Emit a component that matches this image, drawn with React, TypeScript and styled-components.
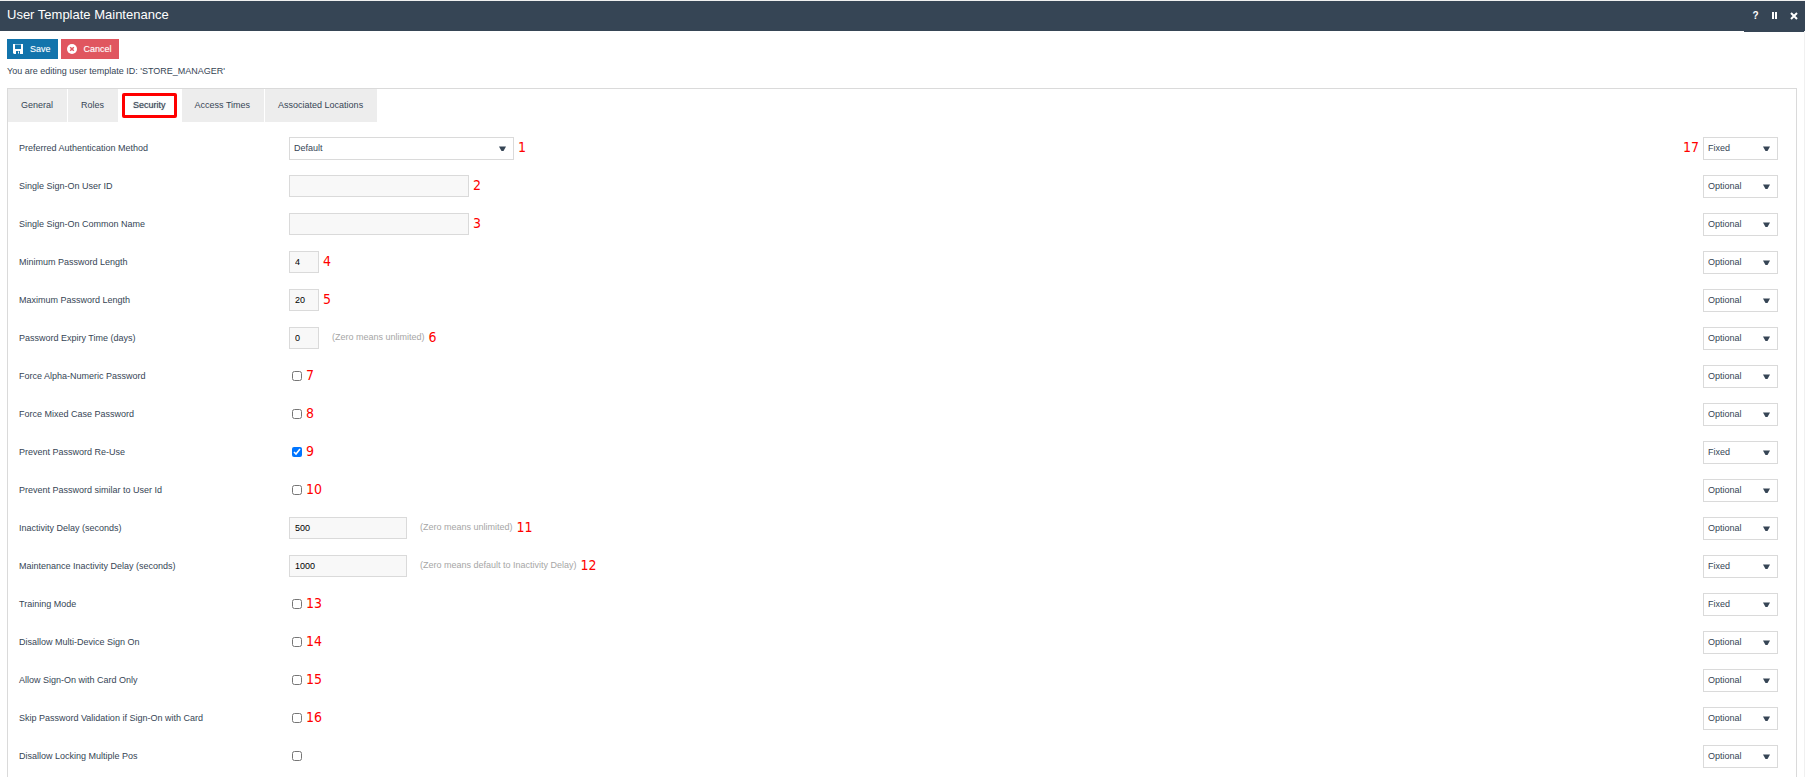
import React, { useState } from "react";
import styled, { createGlobalStyle } from "styled-components";

const slate = "#364555";
const line = "#dadada";

const Global = createGlobalStyle`
  * { box-sizing: border-box; }
  body {
    margin: 0;
    background: #fff;
    color: ${slate};
    font-family: "Liberation Sans", Arial, sans-serif;
    font-size: 9px;
  }
  input, select, button { font: inherit; margin: 0; }
`;

const Page = styled.div`
  display: flex;
  flex-direction: column;
  min-height: 100vh;
  border-top: 1px solid #f0f0f0;
`;

const TitleBar = styled.header`
  display: flex;
  justify-content: space-between;
  height: 30px;
  background: ${slate};
`;

const Title = styled.h1`
  margin: 0;
  padding-left: 7px;
  color: #fff;
  font-size: 13px;
  font-weight: 400;
  line-height: 27px;
`;

const WindowActions = styled.div`
  display: flex;
  height: 31px;
  padding: 0 2px 2px;
  background: ${slate};
`;

const WindowButton = styled.button`
  display: flex;
  align-items: center;
  justify-content: center;
  width: 19px;
  padding: 0;
  border: 0;
  background: none;
  color: #fff;
  font-size: 10px;
  font-weight: 700;
`;

const Content = styled.main`
  display: flex;
  flex: 1;
  flex-direction: column;
  padding: 8px 7px 0;
  border-right: 1px solid #f0f0f0;
`;

const Toolbar = styled.div`
  display: flex;
  gap: 3px;
`;

const ActionButton = styled.button<{ $color: string }>`
  display: flex;
  align-items: center;
  gap: 7px;
  height: 20px;
  padding: 0 7px 0 6px;
  border: 0;
  background: ${(p) => p.$color};
  color: #fff;
  text-shadow: 0 0 1px rgba(255, 255, 255, 0.4);
`;

const Notice = styled.p`
  margin: 0;
  padding: 7px 0 11px;
  line-height: 11px;
`;

const Panel = styled.section`
  flex: 1;
  border: 1px solid ${line};
  border-bottom: 0;
`;

const Tabs = styled.nav`
  display: flex;
  gap: 1px;
  height: 33px;
`;

const Tab = styled.button`
  padding: 0 14px 2px 13px;
  border: 0;
  background: #ededed;
  color: ${slate};
`;

const ActiveTab = styled(Tab)`
  height: 25px;
  margin: 4px 4px 0 3px;
  padding: 0 8px 1px;
  border: 3px solid #f00;
  border-radius: 2px;
  background: #fff;
  text-shadow: 0 0 1px rgba(54, 69, 85, 0.6);
`;

const Form = styled.form`
  padding: 7px 18px 0 11px;
`;

const Row = styled.div`
  display: grid;
  grid-template-columns: 270px 1fr auto;
  align-items: center;
  height: 38px;
`;

const Label = styled.label`
  padding-bottom: 1px;
`;

const Cell = styled.div`
  display: flex;
  align-items: center;
  gap: 4px;
`;

const Field = styled.input<{ $width: number }>`
  width: ${(p) => p.$width}px;
  height: 22px;
  padding: 0 5px;
  border: 1px solid ${line};
  background: #f8f8f8;
  color: #000;
`;

const Check = styled.input`
  width: 10px;
  height: 10px;
  margin: 0 0 1px 3px;
  accent-color: #0075ff;
`;

const Hint = styled.span`
  padding: 0 0 2px 9px;
  color: #a6a6a6;
`;

const Marker = styled.span`
  padding-bottom: 2px;
  color: #f00;
  font-family: "DejaVu Sans Condensed", "Noto Sans", sans-serif;
  font-size: 14px;
  line-height: 18px;
`;

const SelectBox = styled.span<{ $width: number }>`
  position: relative;
  display: block;
  width: ${(p) => p.$width}px;

  select {
    display: block;
    width: 100%;
    height: 23px;
    padding: 0 4px 1px;
    border: 1px solid ${line};
    border-radius: 0;
    background: #fff;
    color: ${slate};
    appearance: none;
  }

  svg {
    position: absolute;
    top: 9px;
    right: 8px;
    pointer-events: none;
  }
`;

type RowData = {
  label: string;
  mark?: string;
  kind: "select" | "text" | "check";
  width?: number;
  value?: string;
  hint?: string;
  on?: boolean;
  mode?: string;
};

const rows: RowData[] = [
  { label: "Preferred Authentication Method", mark: "1", kind: "select", mode: "Fixed" },
  { label: "Single Sign-On User ID", mark: "2", kind: "text", width: 180 },
  { label: "Single Sign-On Common Name", mark: "3", kind: "text", width: 180 },
  { label: "Minimum Password Length", mark: "4", kind: "text", width: 30, value: "4" },
  { label: "Maximum Password Length", mark: "5", kind: "text", width: 30, value: "20" },
  { label: "Password Expiry Time (days)", mark: "6", kind: "text", width: 30, value: "0", hint: "(Zero means unlimited)" },
  { label: "Force Alpha-Numeric Password", mark: "7", kind: "check" },
  { label: "Force Mixed Case Password", mark: "8", kind: "check" },
  { label: "Prevent Password Re-Use", mark: "9", kind: "check", on: true, mode: "Fixed" },
  { label: "Prevent Password similar to User Id", mark: "10", kind: "check" },
  { label: "Inactivity Delay (seconds)", mark: "11", kind: "text", width: 118, value: "500", hint: "(Zero means unlimited)" },
  { label: "Maintenance Inactivity Delay (seconds)", mark: "12", kind: "text", width: 118, value: "1000", hint: "(Zero means default to Inactivity Delay)", mode: "Fixed" },
  { label: "Training Mode", mark: "13", kind: "check", mode: "Fixed" },
  { label: "Disallow Multi-Device Sign On", mark: "14", kind: "check" },
  { label: "Allow Sign-On with Card Only", mark: "15", kind: "check" },
  { label: "Skip Password Validation if Sign-On with Card", mark: "16", kind: "check" },
  { label: "Disallow Locking Multiple Pos", kind: "check" },
];

const Arrow = () => (
  <svg width="7" height="5" viewBox="0 0 7 5" aria-hidden="true">
    <path d="M0 0.500H7L4.500 5H2.500Z" fill={slate} />
  </svg>
);

const SaveIcon = () => (
  <svg width="10" height="10" viewBox="0 0 10 10" aria-hidden="true">
    <path fill="#fff" fillRule="evenodd" d="M0 0H10V10H1L0 9ZM2 0.500V5H8V0.500ZM3 7V10H7V7Z" />
    <path fill="#fff" d="M5 7.500H6V9.500H5Z" />
  </svg>
);

const CancelIcon = () => (
  <svg width="10" height="10" viewBox="0 0 10 10" aria-hidden="true">
    <circle cx="5" cy="5" r="5" fill="#fff" />
    <path d="M3.200 3.200L6.800 6.800M6.800 3.200L3.200 6.800" stroke="#e0565f" strokeWidth="1.500" />
  </svg>
);

function FieldRow({ row, index }: { row: RowData; index: number }) {
  const [value, setValue] = useState(row.value ?? "");
  const [on, setOn] = useState(Boolean(row.on));
  const id = `field-${index}`;
  return (
    <Row>
      <Label htmlFor={id}>{row.label}</Label>
      <Cell>
        {row.kind === "select" && (
          <SelectBox $width={225}>
            <select id={id}>
              <option>Default</option>
            </select>
            <Arrow />
          </SelectBox>
        )}
        {row.kind === "text" && (
          <Field id={id} type="text" $width={row.width ?? 180} value={value} onChange={(e) => setValue(e.target.value)} />
        )}
        {row.kind === "check" && (
          <Check id={id} type="checkbox" checked={on} onChange={(e) => setOn(e.target.checked)} />
        )}
        {row.hint && <Hint>{row.hint}</Hint>}
        {row.mark && <Marker>{row.mark}</Marker>}
      </Cell>
      <Cell>
        {index === 0 && <Marker>17</Marker>}
        <SelectBox $width={75}>
          <select aria-label={`${row.label} mode`} defaultValue={row.mode ?? "Optional"}>
            <option>Optional</option>
            <option>Fixed</option>
          </select>
          <Arrow />
        </SelectBox>
      </Cell>
    </Row>
  );
}

export default function App() {
  return (
    <Page>
      <Global />
      <TitleBar>
        <Title>User Template Maintenance</Title>
        <WindowActions>
          <WindowButton aria-label="Help">?</WindowButton>
          <WindowButton aria-label="Pause">
            <svg width="5" height="7" viewBox="0 0 5 7">
              <path d="M0 0H2V7H0ZM3 0H5V7H3Z" fill="#fff" />
            </svg>
          </WindowButton>
          <WindowButton aria-label="Close">
            <svg width="8" height="8" viewBox="0 0 8 8">
              <path d="M1 1L7 7M7 1L1 7" stroke="#fff" strokeWidth="2" />
            </svg>
          </WindowButton>
        </WindowActions>
      </TitleBar>
      <Content>
        <Toolbar>
          <ActionButton $color="#1274ac">
            <SaveIcon />
            Save
          </ActionButton>
          <ActionButton $color="#e0565f">
            <CancelIcon />
            Cancel
          </ActionButton>
        </Toolbar>
        <Notice>You are editing user template ID: 'STORE_MANAGER'</Notice>
        <Panel>
          <Tabs>
            <Tab>General</Tab>
            <Tab>Roles</Tab>
            <ActiveTab>Security</ActiveTab>
            <Tab>Access Times</Tab>
            <Tab>Associated Locations</Tab>
          </Tabs>
          <Form>
            {rows.map((row, i) => (
              <FieldRow key={row.label} row={row} index={i} />
            ))}
          </Form>
        </Panel>
      </Content>
    </Page>
  );
}
